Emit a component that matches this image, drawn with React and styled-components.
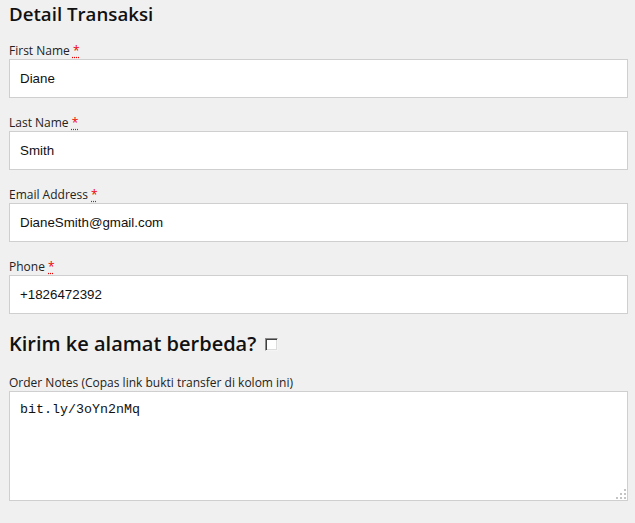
import React from "react";
import styled, { createGlobalStyle } from "styled-components";

const Global = createGlobalStyle`
  html, body { margin: 0; padding: 0; background: #f0f0f0; }
  body { font-family: "Open Sans", "Noto Sans", sans-serif; color: #111; }
  * { box-sizing: border-box; }
`;

const Page = styled.div`
  padding: 0 8px 0 9px;
  width: 635px;
`;

const Heading = styled.h3`
  margin: ${(p) => p.$mt || 0}px 0 ${(p) => p.$mb || 0}px;
  font-size: ${(p) => p.$size || 20}px;
  font-weight: 600;
  line-height: 28px;
  color: #111;
  display: flex;
  align-items: center;
`;

const Field = styled.div`
  display: flex;
  flex-direction: column;
  margin-bottom: ${(p) => (p.$last ? 0 : 16)}px;
`;

const Label = styled.label`
  display: block;
  font-size: 12px;
  line-height: 16px;
  color: #222;
  padding-top: 1px;
`;

const Req = styled.abbr`
  color: #e00;
  text-decoration: underline dotted #e00;
  text-underline-offset: 2px;
  cursor: help;
`;

const Input = styled.input`
  width: 619px;
  height: 39px;
  border: 1px solid #cfcfcf;
  background: #fff;
  padding: 0 10px;
  font-family: "Liberation Sans", Arial, sans-serif;
  font-size: 13.33px;
  color: #111;
  outline: none;
  margin: 0;
`;

const AreaWrap = styled.div`
  position: relative;
  width: 619px;
  height: 110px;
`;

const TextArea = styled.textarea`
  width: 619px;
  height: 110px;
  border: 1px solid #cfcfcf;
  background: #fff;
  padding: 10px 10px;
  font-family: "Liberation Mono", "Courier New", monospace;
  font-size: 13.33px;
  line-height: 15px;
  color: #111;
  outline: none;
  margin: 0;
  resize: none;
  display: block;
`;

const Grip = styled.svg`
  position: absolute;
  right: 2px;
  bottom: 2px;
  width: 10px;
  height: 10px;
  pointer-events: none;
`;

const Check = styled.input`
  appearance: none;
  width: 13px;
  height: 13px;
  margin: 0 0 0 9px;
  border-style: solid;
  border-width: 1px;
  border-color: #8a8a8a #f4f4f4 #f4f4f4 #8a8a8a;
  box-shadow: inset 1px 1px 0 #404040, inset -1px -1px 0 #dcdcdc;
  background: #fff;
  border-radius: 0;
`;

const fields = [
  ["First Name", "Diane"],
  ["Last Name", "Smith"],
  ["Email Address", "DianeSmith@gmail.com"],
  ["Phone", "+1826472392"],
];

export default function App() {
  return (
    <>
      <Global />
      <Page>
        <Heading $size={18.7} $mt={0} $mb={14}>Detail Transaksi</Heading>
        {fields.map(([l, v], i) => (
          <Field key={l} $last={i === fields.length - 1}>
            <Label>
              {l} <Req title="required">*</Req>
            </Label>
            <Input defaultValue={v} />
          </Field>
        ))}
        <Heading $size={20} $mt={16} $mb={16}>
          Kirim ke alamat berbeda? <Check type="checkbox" />
        </Heading>
        <Field $last>
          <Label>Order Notes (Copas link bukti transfer di kolom ini)</Label>
          <AreaWrap>
            <TextArea defaultValue="bit.ly/3oYn2nMq" />
            <Grip viewBox="0 0 10 10" aria-hidden="true">
              <g fill="#c4c4c4">
                <rect x="8" y="0" width="2" height="2" />
                <rect x="4" y="4" width="2" height="2" />
                <rect x="8" y="4" width="2" height="2" />
                <rect x="0" y="8" width="2" height="2" />
                <rect x="4" y="8" width="2" height="2" />
                <rect x="8" y="8" width="2" height="2" />
              </g>
            </Grip>
          </AreaWrap>
        </Field>
      </Page>
    </>
  );
}
